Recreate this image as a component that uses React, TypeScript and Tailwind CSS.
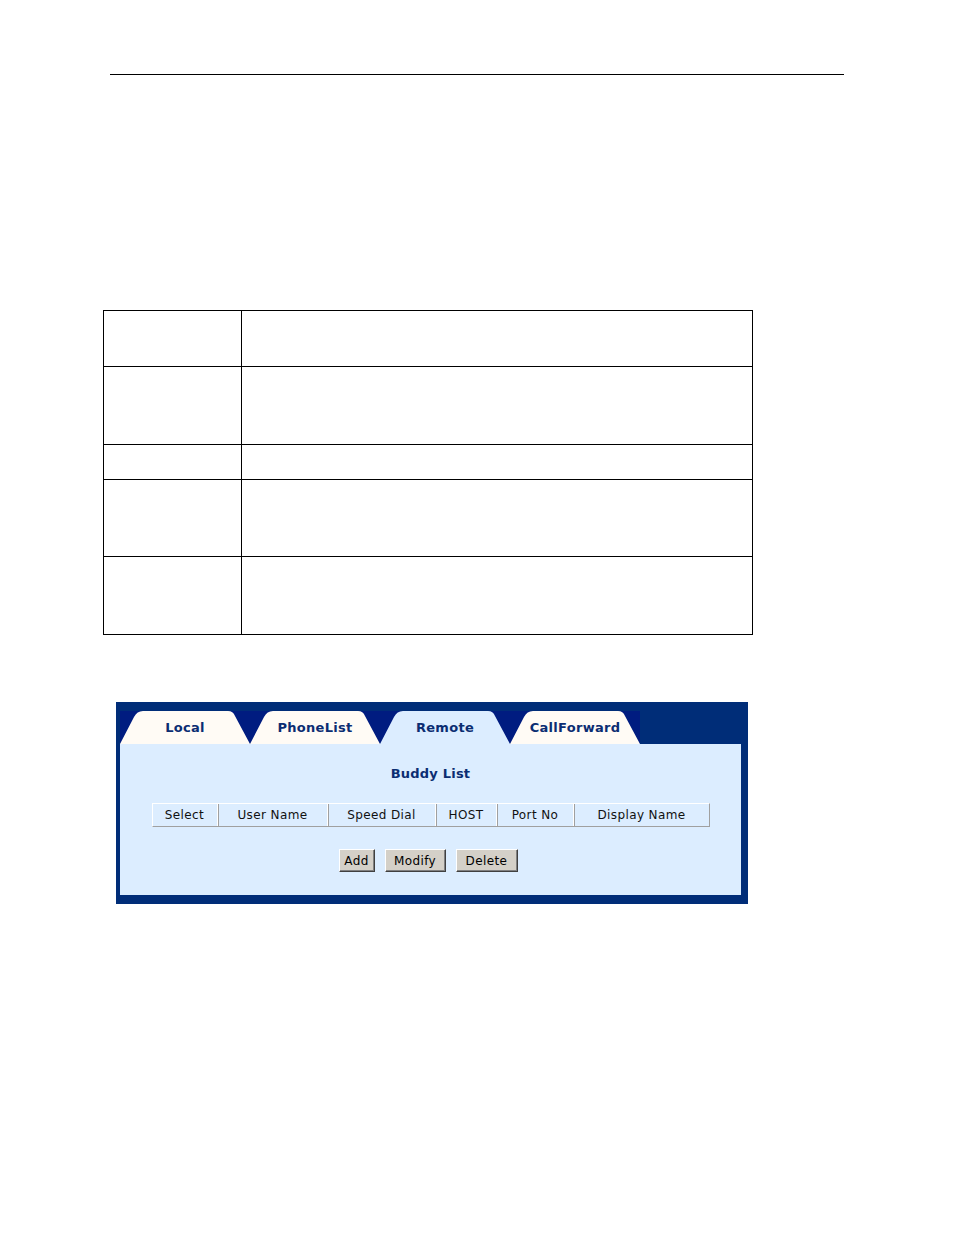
const verdana = { fontFamily: '"DejaVu Sans", Verdana, sans-serif' }

const rows = [55, 77, 34, 76, 77]

const tabs = [
  { name: 'Local', active: false },
  { name: 'PhoneList', active: false },
  { name: 'Remote', active: true },
  { name: 'CallForward', active: false },
]

const columns = [
  { name: 'Select', w: 'w-[65px]' },
  { name: 'User Name', w: 'w-[110px]' },
  { name: 'Speed Dial', w: 'w-[108px]' },
  { name: 'HOST', w: 'w-[61px]' },
  { name: 'Port No', w: 'w-[77px]' },
  { name: 'Display Name', w: 'w-[135px]' },
]

const buttons = [
  { name: 'Add', w: 'w-[36px]' },
  { name: 'Modify', w: 'w-[61px]' },
  { name: 'Delete', w: 'w-[62px]' },
]

function Tab({ name, active }: { name: string; active: boolean }) {
  return (
    <div className="relative flex h-[33px] w-[130px] items-center justify-center">
      <svg className="absolute inset-0" width="130" height="33" viewBox="0 0 130 33">
        <path
          d="M0,33 L14,6 Q17,0 23,0 L108,0 Q113,0 115,5 L130,33 Z"
          fill={active ? '#dcedff' : '#fffbf5'}
        />
      </svg>
      <span className="relative text-[13px] font-bold tracking-[0.3px] text-[#0b2d72]" style={verdana}>
        {name}
      </span>
    </div>
  )
}

export default function App() {
  return (
    <div className="h-[1235px] w-[954px] bg-white pt-[74px]">
      {/* header rule */}
      <div className="mx-[110px] h-px bg-black" />

      {/* empty parameter table */}
      <div className="ml-[103px] mt-[235px] w-[650px] border border-black">
        {rows.map((h, i) => (
          <div key={i} className={i > 0 ? 'flex border-t border-black' : 'flex'}>
            <div className="w-[137px]" style={{ height: h }} />
            <div className="flex-1 border-l border-black" />
          </div>
        ))}
      </div>

      {/* screenshot of the web UI */}
      <div className="ml-[116px] mt-[67px] flex w-[632px] flex-col bg-[#002d78] pb-[9px] pl-[4px] pr-[7px] pt-[9px]">
        <div className="flex h-[33px] w-[520px] bg-[#001c80]">
          {tabs.map((t) => (
            <Tab key={t.name} name={t.name} active={t.active} />
          ))}
        </div>
        <div className="flex h-[151px] flex-col items-center bg-[#dcedff] pt-[22px]">
          <div className="text-[13px] font-bold leading-4 tracking-[0.2px] text-[#0b2d72]" style={verdana}>
            Buddy List
          </div>
          <div className="mt-[21px] flex h-[24px] border-b border-l border-r border-t border-b-[#a0a0a0] border-l-white border-r-[#a0a0a0] border-t-white">
            {columns.map((c, i) => (
              <div
                key={c.name}
                className={
                  'flex items-center justify-center text-[12px] tracking-[0.4px] text-[#111] ' +
                  c.w +
                  (i > 0 ? ' border-l border-l-[#a0a0a0]' : '') +
                  (i < columns.length - 1 ? ' border-r border-r-white' : '')
                }
                style={verdana}
              >
                {c.name}
              </div>
            ))}
          </div>
          <div className="mt-[22px] flex gap-[10px] pr-[5px]">
            {buttons.map((b) => (
              <div
                key={b.name}
                className={
                  'flex h-[23px] items-center justify-center border border-b-[#404040] border-l-white border-r-[#404040] border-t-white bg-[#d4d0c8] text-[12px] tracking-[0.4px] text-black shadow-[inset_-1px_-1px_0_#808080] ' +
                  b.w
                }
                style={verdana}
              >
                {b.name}
              </div>
            ))}
          </div>
        </div>
      </div>
    </div>
  )
}
